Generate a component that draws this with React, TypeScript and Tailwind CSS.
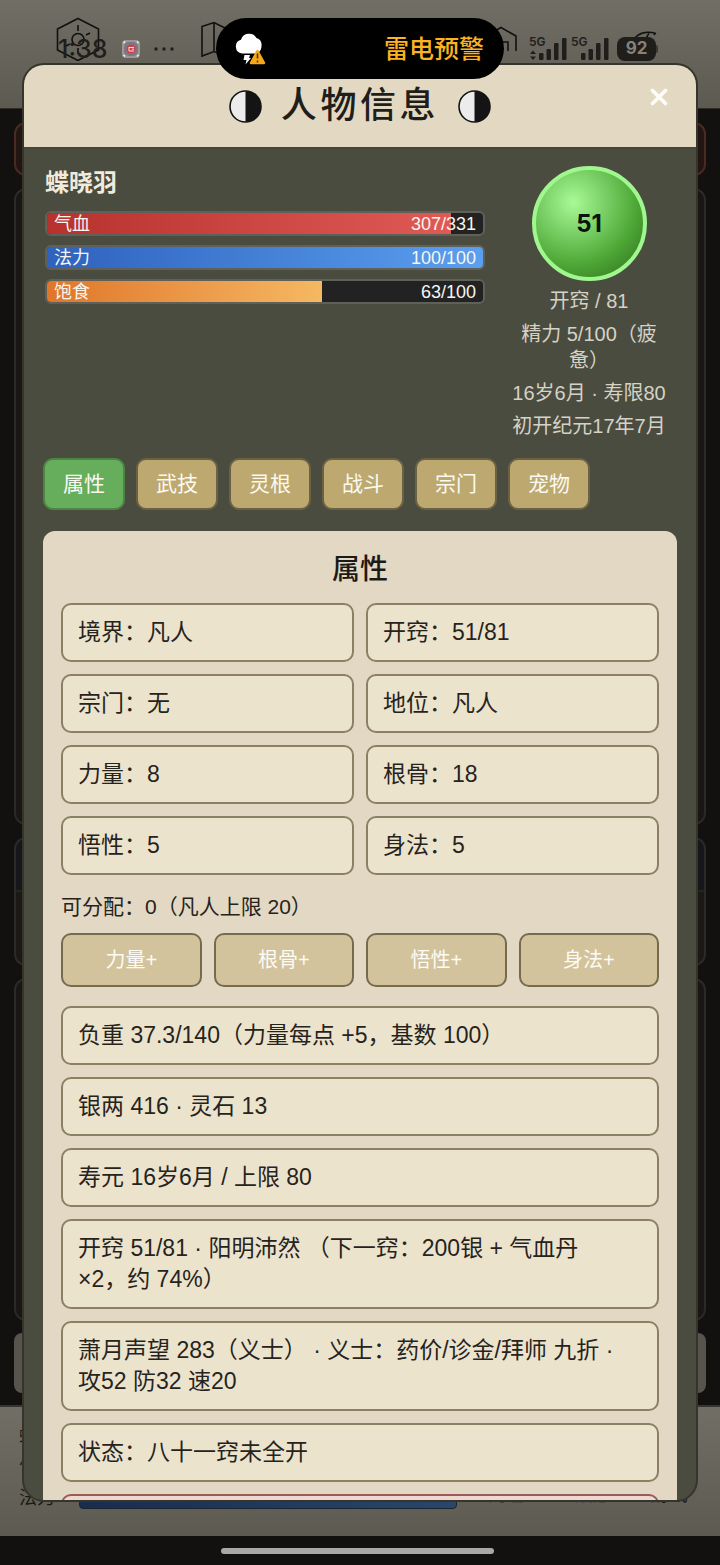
import type { ReactNode } from "react";
import { X } from "lucide-react";

const TABS = ["属性", "武技", "灵根", "战斗", "宗门", "宠物"];

const ATTRS = [
  ["境界", "凡人"],
  ["开窍", "51/81"],
  ["宗门", "无"],
  ["地位", "凡人"],
  ["力量", "8"],
  ["根骨", "18"],
  ["悟性", "5"],
  ["身法", "5"],
];

const POINTS = ["力量", "根骨", "悟性", "身法"];

const DETAILS = [
  "负重 37.3/140（力量每点 +5，基数 100）",
  "银两 416 · 灵石 13",
  "寿元 16岁6月 / 上限 80",
  "开窍 51/81 · 阳明沛然 （下一窍：200银 + 气血丹\n×2，约 74%）",
  "萧月声望 283（义士） · 义士：药价/诊金/拜师 九折 ·\n攻52 防32 速20",
  "状态：八十一窍未全开",
];

const BARS = [
  { label: "气血", value: 307, max: 331, fill: "bg-linear-to-r from-[#b7322d] to-[#e05a55]" },
  { label: "法力", value: 100, max: 100, fill: "bg-linear-to-r from-[#2f62bd] to-[#5b9ff0]" },
  { label: "饱食", value: 63, max: 100, fill: "bg-linear-to-r from-[#df7628] to-[#f5b862]" },
];

function NavIcon({ children }: { children?: ReactNode }) {
  return (
    <svg viewBox="0 0 44 44" className="size-11 justify-self-center" fill="none" stroke="#12110f" strokeWidth="1.6">
      {children}
    </svg>
  );
}

function Signal({ arrows = false }: { arrows?: boolean }) {
  return (
    <svg viewBox="0 0 38 30" className="h-[30px] w-[38px]" fill="#1f1e1b" aria-label="5G">
      <text x="0" y="15" fontSize="12" fontWeight="600" fontFamily="Inter, sans-serif">
        5G
      </text>
      {arrows && <path d="M1 23l3-3.5 3 3.5zM1 25.5l3 3.5 3-3.5z" />}
      <rect x="10" y="22" width="4.5" height="7" rx="1.2" />
      <rect x="17.5" y="18" width="4.5" height="11" rx="1.2" />
      <rect x="25" y="12" width="4.5" height="17" rx="1.2" />
      <rect x="33" y="7" width="4.5" height="22" rx="1.2" />
    </svg>
  );
}

function StatusBar() {
  return (
    <div className="absolute inset-x-0 top-0 flex h-[61px] items-end justify-between pr-[62px] pl-[58px] text-[#1f1e1b]">
      <div className="flex h-6 items-center">
        <span className="w-[50px] font-[Inter] text-[25px] leading-6 font-medium whitespace-nowrap">1:38</span>
        <svg viewBox="0 0 18 18" className="ml-3.5 size-[18px]">
          <rect width="18" height="18" rx="4" fill="#9b9894" />
          <rect x="2" y="2" width="14" height="14" rx="5" fill="#7b7784" />
          <circle cx="9" cy="9" r="4.6" fill="#c9434a" />
          <path d="M7 7.500h5M7 11h5M7 7v4M10 9.200h2" stroke="#f2dcdc" strokeWidth="1" />
          <path d="M1.500 3l1.500-1.500M15 1.500l1.500 1.500M1.500 15l1.500 1.500M15 16.500l1.500-1.500" stroke="#fff" strokeWidth="1.2" />
        </svg>
        <svg viewBox="0 0 20 4" className="ml-3.5 h-1 w-5" fill="#1f1e1b">
          <circle cx="2" cy="2" r="1.7" />
          <circle cx="10" cy="2" r="1.7" />
          <circle cx="18" cy="2" r="1.7" />
        </svg>
      </div>
      <div className="flex items-end gap-1">
        <Signal arrows />
        <Signal />
        <div className="ml-1 flex items-center">
          <span className="flex h-6 w-[39px] items-center justify-center rounded-lg bg-[#1f1e1b] font-[Inter] text-[17px] font-bold text-[#85827a]">
            92
          </span>
          <span className="h-2 w-0.5 rounded-r-full bg-[#3b3933]" />
        </div>
      </div>
    </div>
  );
}

function GameScreen() {
  return (
    <div className="flex h-full flex-col bg-[#12110f] text-[#1a1916]" aria-hidden="true">
      <header className="grid h-[109px] grid-cols-5 border-b border-[#2d2c28] bg-linear-to-b from-[#706e65] to-[#5c5a51] px-[7px] pt-[17px]">
        <NavIcon>
          <path d="M22 1.500L42.500 12v21L22 43.500 1.500 33V12z" />
          <circle cx="22" cy="22.500" r="6" />
          <path d="M22 8v6M22 31v6M10 29l4-2M30 18l4-2" />
        </NavIcon>
        <NavIcon>
          <path d="M5 9.500L17 5.500l11 5.500 11-5v28l-11 5-11-4.500L5 39zM17 5.500v29M28 11v28" />
        </NavIcon>
        <NavIcon />
        <NavIcon>
          <path d="M7 34V19l15-8.500L37 19v15M15 34V25h14v9" />
        </NavIcon>
        <NavIcon>
          <path d="M10 28c5-10 13-15.500 26-11.500M29 16c-2 4-4 7-6 11M15 24l8 3M34 18l1.500-2" />
        </NavIcon>
      </header>
      <main className="flex flex-1 flex-col gap-3 px-3.5 pt-[13px] pb-3">
        <section className="h-[54px] rounded-xl border-2 border-[#4a2b24] bg-[#221512]" />
        <section className="flex-1 rounded-xl border-2 border-[#2b2a28] bg-[#191715]" />
        <section className="h-[129px] overflow-hidden rounded-xl border-2 border-[#2b2a28] bg-[#1b1815]">
          <div className="h-[53px] border-b-2 border-[#242529] bg-[#16171a]" />
        </section>
        <section className="h-[343px] rounded-xl border-2 border-[#2b2a28] bg-[#191715]" />
        <section className="h-[60px] rounded-lg bg-[#57544e]" />
      </main>
      <footer className="flex h-[131px] border-t-2 border-[#35342f] bg-linear-to-b from-[#706e65] to-[#5c5a51] pr-8 pl-[19px]">
        <div className="flex-1 pt-3.5 text-lg leading-[31px]">
          <p>蝶晓羽</p>
          <p>气血</p>
          <div className="flex items-center">
            <span className="w-[60px]">法力</span>
            <span className="h-5 flex-1 rounded-sm border border-[#1b2530] bg-linear-to-r from-[#192c4d] to-[#29476b]" />
          </div>
        </div>
        <div className="ml-[31px] flex items-end gap-[43px] pb-[29px] text-[19px] leading-6">
          <span>角色</span>
          <span>功能</span>
          <span>游戏</span>
        </div>
      </footer>
      <div className="flex h-[29px] items-center justify-center pr-[5px]">
        <span className="h-1.5 w-[273px] rounded-full bg-[#aaa8a7]" />
      </div>
    </div>
  );
}

function YinYang() {
  return (
    <svg viewBox="0 0 33 33" className="size-[33px]">
      <circle cx="16.500" cy="16.500" r="15.500" fill="#ececec" stroke="#141414" strokeWidth="1.600" />
      <path d="M16.500 1a15.500 15.500 0 0 1 0 31z" fill="#141414" />
    </svg>
  );
}

function Box({ children }: { children: ReactNode }) {
  return (
    <div className="rounded-[10px] border-2 border-[#8c8064] bg-[#ece3cd] px-[15px] py-3 text-[23px] leading-[31px] whitespace-pre-line">
      {children}
    </div>
  );
}

function Stats() {
  return (
    <div className="flex gap-[18px] px-0.5">
      <div className="min-w-0 flex-1">
        <h2 className="mb-[11px] text-2xl leading-[34px] font-bold text-[#efebdd]">蝶晓羽</h2>
        <div className="flex flex-col gap-[9px]">
          {BARS.map((b) => (
            <div
              key={b.label}
              className="relative h-[25px] overflow-hidden rounded-md border-2 border-[#60605a] bg-[#222222]"
            >
              <div className={`h-full ${b.fill}`} style={{ width: `${(b.value / b.max) * 100}%` }} />
              <div className="absolute inset-0 flex items-center justify-between px-[7px] text-lg leading-5 text-[#f7f5ee]">
                <span>{b.label}</span>
                <span>
                  {b.value}/{b.max}
                </span>
              </div>
            </div>
          ))}
        </div>
      </div>
      <div className="flex w-[172px] flex-col items-center gap-[7px] text-center text-xl leading-[26px] text-[#d5d2c6]">
        <div className="flex size-[115px] items-center justify-center rounded-full border-4 border-[#9ff78e] bg-[radial-gradient(circle_at_35%_30%,#a8fa98_0%,#4fa937_60%,#2b6a1c_100%)] font-[Inter] text-2xl font-bold text-[#0b140a]">
          51
        </div>
        <p>开窍 / 81</p>
        <p className="px-3">精力 5/100（疲惫）</p>
        <p className="whitespace-nowrap">16岁6月 · 寿限80</p>
        <p>初开纪元17年7月</p>
      </div>
    </div>
  );
}

export default function App() {
  return (
    <div className="relative h-screen overflow-hidden font-['Liberation_Sans','Noto_Sans_CJK_SC',sans-serif]">
      <GameScreen />
      <StatusBar />

      <div
        role="dialog"
        aria-modal="true"
        aria-labelledby="dialog-title"
        className="absolute inset-x-[22px] top-[63px] bottom-[63px] flex flex-col overflow-hidden rounded-[22px] border-2 border-[#35352b] bg-[#4b4c40]"
      >
        <header className="grid h-[84px] shrink-0 grid-cols-[1fr_auto_1fr] items-center border-b-2 border-[#45443a] bg-[#e3d9c2]">
          <div className="col-start-2 flex items-center gap-[19px]">
            <YinYang />
            <h1 id="dialog-title" className="text-4xl font-medium tracking-widest text-[#1f1e1a]">
              人物信息
            </h1>
            <YinYang />
          </div>
          <button aria-label="关闭" className="mt-[19px] mr-6 self-start justify-self-end text-[#fdfcf8]">
            <X size={26} strokeWidth={3.5} />
          </button>
        </header>

        <div className="flex-1 overflow-hidden px-[19px] pt-[17px]">
          <Stats />

          <nav className="mt-[19px] flex gap-[11px]">
            {TABS.map((t, i) => (
              <button
                key={t}
                className={`h-[52px] rounded-[10px] border-2 px-[18px] text-[21px] leading-8 whitespace-nowrap text-[#fbf9f0] ${
                  i === 0 ? "border-[#4d8544] bg-[#66ae5c]" : "border-[#6b6144] bg-[#bda96f]"
                }`}
              >
                {t}
              </button>
            ))}
          </nav>

          <section className="mt-[21px] rounded-t-xl bg-[#e3d8c3] p-[18px] text-[#26231d]">
            <h2 className="mb-3 text-center text-[28px] leading-[42px] font-medium text-[#1c1a16]">属性</h2>
            <div className="grid grid-cols-2 gap-3">
              {ATTRS.map(([k, v]) => (
                <Box key={k}>
                  {k}：{v}
                </Box>
              ))}
            </div>

            <p className="mt-4 text-[21px] leading-8">可分配：0（凡人上限 20）</p>
            <div className="mt-2.5 grid grid-cols-4 gap-3">
              {POINTS.map((p) => (
                <button
                  key={p}
                  className="h-[54px] rounded-[10px] border-2 border-[#766b4f] bg-[#d3c39c] text-xl text-[#fdfbf5]"
                >
                  {p}+
                </button>
              ))}
            </div>

            <div className="mt-[19px] flex flex-col gap-3">
              {DETAILS.map((d) => (
                <Box key={d}>{d}</Box>
              ))}
              <div className="h-[59px] rounded-[10px] border-2 border-[#9a5a57] bg-[#efd8d2]" />
            </div>
          </section>
        </div>
      </div>

      <div
        role="status"
        className="absolute top-[18px] left-1/2 flex h-[61px] w-72 -translate-x-1/2 items-center justify-between rounded-full bg-black pr-5 pl-[18px]"
      >
        <svg viewBox="0 0 32 34" className="h-[34px] w-8">
          <path
            d="M8 21.500a7 7 0 0 1-1-13.700A8.500 8.500 0 0 1 22.500 6a7.500 7.500 0 0 1 5 8c0 4-2.500 7.500-6.500 7.500z"
            fill="#fff"
          />
          <path d="M10.500 23h5.500l-1 3h2l-5.500 6.500 1-4.500H9.500z" fill="#fff" />
          <path d="M23.500 19l6.500 12H17z" fill="#f6a81c" stroke="#f6a81c" strokeWidth="2.500" strokeLinejoin="round" />
          <path d="M23.500 21.500v5M23.500 28.500v2" stroke="#5a3a05" strokeWidth="1.600" />
        </svg>
        <span className="text-[25px] leading-8 font-medium text-[#fbb321]">雷电预警</span>
      </div>
    </div>
  );
}
